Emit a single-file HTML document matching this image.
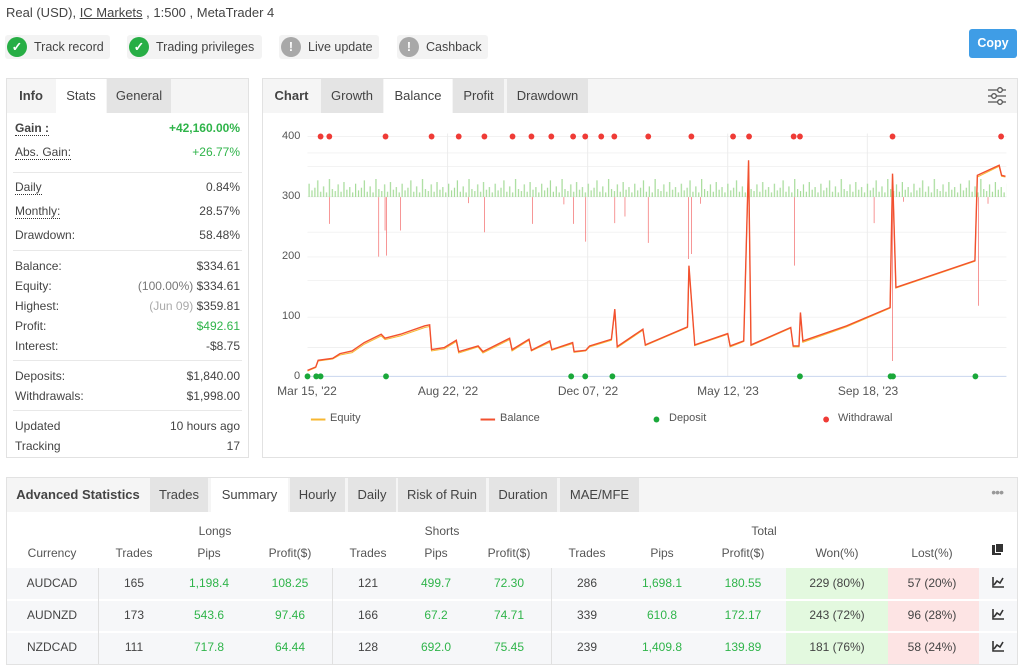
<!DOCTYPE html>
<html><head><meta charset="utf-8">
<style>
*{box-sizing:border-box;margin:0;padding:0}
body{width:1024px;height:669px;background:#fff;font-family:"Liberation Sans",sans-serif;color:#333;position:relative;overflow:hidden;font-size:12px}
.abs{position:absolute}
.badge{position:absolute;top:35px;height:24px;background:#f3f3f3;border-radius:3px;font-size:12.5px;line-height:24px;padding-left:29px;color:#444}
.badge i{position:absolute;left:2px;top:2px;width:20px;height:20px;border-radius:50%;font-style:normal;color:#fff;text-align:center;line-height:20px;font-weight:bold}
.panel{position:absolute;border:1px solid #e2e2e2;background:#fff}
.hdr{position:absolute;left:0;top:0;right:0;height:34px;background:#f5f5f5}
.tab{position:absolute;top:0;height:34px;line-height:34px;font-size:13px;text-align:center;color:#444;background:#e4e4e4}
.tab.w{background:#fff}
.tab.n{background:none;font-weight:bold;color:#444}
.row{position:absolute;left:8px;right:8px;font-size:12px;color:#444}
.row span{position:absolute;right:0}
.dl{border-bottom:1px dotted #333}
.sep{position:absolute;left:6px;right:6px;height:1px;background:#e8e8e8}
.g{color:#2fb44a}
.c{position:absolute;text-align:center;transform:translateX(-50%);font-size:12px}
</style></head><body>
<div class="abs" style="left:6px;top:5px;font-size:13px;color:#444">Real (USD), <u>IC Markets</u> , 1:500 , MetaTrader 4</div>
<div class="badge" style="left:5px;width:105px"><i style="background:#27ae45">✓</i>Track record</div>
<div class="badge" style="left:127px;width:135px"><i style="background:#27ae45">✓</i>Trading privileges</div>
<div class="badge" style="left:279px;width:100px"><i style="background:#a8a8a8">!</i>Live update</div>
<div class="badge" style="left:397px;width:91px"><i style="background:#a8a8a8">!</i>Cashback</div>
<div class="abs" style="left:969px;top:29px;width:48px;height:29px;background:#3f9de6;border-radius:3px;color:#fff;font-weight:bold;font-size:12.5px;text-align:center;line-height:29px">Copy</div>

<div class="panel" style="left:6px;top:78px;width:243px;height:380px">
<div class="hdr"></div>
<div class="tab n" style="left:0;width:48px">Info</div>
<div class="tab w" style="left:49px;width:50px">Stats</div>
<div class="tab" style="left:100px;width:64px">General</div>
<div class="row" style="top:42px;font-weight:bold"><b class="dl">Gain :</b><span class="g">+42,160.00%</span></div>
<div class="row" style="top:66px"><a class="dl">Abs. Gain:</a><span class="g">+26.77%</span></div>
<div class="sep" style="top:93px"></div>
<div class="row" style="top:101px"><a class="dl">Daily</a><span>0.84%</span></div>
<div class="row" style="top:125px"><a class="dl">Monthly:</a><span>28.57%</span></div>
<div class="row" style="top:149px">Drawdown:<span>58.48%</span></div>
<div class="sep" style="top:171px"></div>
<div class="row" style="top:180px">Balance:<span>$334.61</span></div>
<div class="row" style="top:200px">Equity:<span><a style="color:#777">(100.00%)</a> $334.61</span></div>
<div class="row" style="top:220px">Highest:<span><a style="color:#aaa">(Jun 09)</a> $359.81</span></div>
<div class="row" style="top:240px">Profit:<span class="g">$492.61</span></div>
<div class="row" style="top:260px">Interest:<span>-$8.75</span></div>
<div class="sep" style="top:281px"></div>
<div class="row" style="top:290px">Deposits:<span>$1,840.00</span></div>
<div class="row" style="top:310px">Withdrawals:<span>$1,998.00</span></div>
<div class="sep" style="top:331px"></div>
<div class="row" style="top:340px">Updated<span>10 hours ago</span></div>
<div class="row" style="top:360px">Tracking<span>17</span></div>
</div>

<div class="panel" style="left:262px;top:78px;width:756px;height:380px">
<div class="hdr"></div>
<div class="tab n" style="left:0;width:57px">Chart</div>
<div class="tab" style="left:58px;width:62px">Growth</div>
<div class="tab w" style="left:121px;width:68px">Balance</div>
<div class="tab" style="left:190px;width:51px">Profit</div>
<div class="tab" style="left:244px;width:81px">Drawdown</div>
<svg class="abs" style="left:723px;top:7px" width="22" height="20" viewBox="0 0 22 20" fill="none" stroke="#555" stroke-width="1.3"><path d="M2 4H20M2 10H20M2 16H20"/><circle cx="14" cy="4" r="2.3" fill="#fff"/><circle cx="8" cy="10" r="2.3" fill="#fff"/><circle cx="14" cy="16" r="2.3" fill="#fff"/></svg>
</div>

<svg class="abs" style="left:260px;top:80px" width="760" height="380" viewBox="0 0 1568 1136" preserveAspectRatio="none">
<defs><pattern id="bp" x="100" y="0" width="96" height="1136" patternUnits="userSpaceOnUse">
<g fill="#a6dc9a"><rect x="0" y="310" width="2.5" height="40"/><rect x="6" y="330" width="2.5" height="20"/><rect x="12" y="322" width="2.5" height="28"/><rect x="18" y="300" width="2.5" height="50"/><rect x="24" y="334" width="2.5" height="16"/><rect x="30" y="318" width="2.5" height="32"/><rect x="36" y="336" width="2.5" height="14"/><rect x="42" y="296" width="2.5" height="54"/><rect x="48" y="326" width="2.5" height="24"/><rect x="54" y="332" width="2.5" height="18"/><rect x="60" y="312" width="2.5" height="38"/><rect x="66" y="334" width="2.5" height="16"/><rect x="72" y="305" width="2.5" height="45"/><rect x="78" y="328" width="2.5" height="22"/><rect x="84" y="320" width="2.5" height="30"/><rect x="90" y="336" width="2.5" height="14"/></g>
</pattern></defs>
<g stroke="#ececec" stroke-width="2"><path d="M98 169H1540M98 349H1540M98 529H1540M98 709H1540M98 218H1540M98 258H1540M98 455H1540M98 600H1540M98 800H1540"/><path d="M387 160V886M676 160V886M965 160V886M1253 160V886"/></g>
<path d="M98 886H1540" stroke="#c9d6ee" stroke-width="3"/>
<rect x="100" y="290" width="1440" height="60" fill="url(#bp)"/>
<g stroke="#f25a5a" stroke-width="1.3" vector-effect="non-scaling-stroke"><path d="M143 350V430M245 350V528M258 350V450M261 350V525M290 350V450M463 350V455M562 350V430M647 350V430M672 350V483M732 350V428M753 350V408M801 350V487M884 350V535M890 350V520M1103 350V555M1267 350V428M1305 350V840M1482 350V675M1502 350V370M430 350V368M627 350V372M909 350V370M1328 350V364"/></g>
<polyline fill="none" stroke="#f7b731" stroke-width="1" vector-effect="non-scaling-stroke" points="98,870 115,860 120,840 150,834 165,822 190,815 215,790 250,765 258,776 290,765 340,740 350,737 354,810 380,804 405,782 410,816 450,798 460,816 515,776 520,810 555,778 560,810 598,784 602,808 645,788 648,814 672,810 680,798 725,778 732,690 737,800 790,748 795,794 882,740 885,560 897,794 965,760 970,798 998,782 1008,245 1013,794 1095,742 1100,798 1112,798 1115,700 1120,784 1210,738 1300,682 1305,285 1312,622 1475,542 1480,290 1525,258 1530,288 1538,290"/>
<polyline fill="none" stroke="#f2502f" stroke-width="1.4" vector-effect="non-scaling-stroke" points="98,868 115,858 120,838 150,832 165,818 190,810 215,785 250,760 258,772 290,760 340,735 350,732 354,806 380,800 405,778 410,812 450,795 460,812 515,772 520,806 555,775 560,808 598,780 602,806 645,785 648,812 672,808 680,795 725,775 732,685 737,797 790,745 795,792 882,738 885,555 897,792 965,758 970,795 998,780 1008,240 1013,792 1095,740 1100,795 1112,795 1115,695 1120,780 1210,735 1300,680 1305,280 1312,620 1475,540 1480,285 1525,255 1530,285 1538,288"/>
<g fill="#ef3b36"><ellipse cx="125" cy="169" rx="6" ry="9"/><ellipse cx="143" cy="169" rx="6" ry="9"/><ellipse cx="259" cy="169" rx="6" ry="9"/><ellipse cx="354" cy="169" rx="6" ry="9"/><ellipse cx="410" cy="169" rx="6" ry="9"/><ellipse cx="463" cy="169" rx="6" ry="9"/><ellipse cx="521" cy="169" rx="6" ry="9"/><ellipse cx="560" cy="169" rx="6" ry="9"/><ellipse cx="601" cy="169" rx="6" ry="9"/><ellipse cx="646" cy="169" rx="6" ry="9"/><ellipse cx="671" cy="169" rx="6" ry="9"/><ellipse cx="704" cy="169" rx="6" ry="9"/><ellipse cx="731" cy="169" rx="6" ry="9"/><ellipse cx="801" cy="169" rx="6" ry="9"/><ellipse cx="890" cy="169" rx="6" ry="9"/><ellipse cx="976" cy="169" rx="6" ry="9"/><ellipse cx="1009" cy="169" rx="6" ry="9"/><ellipse cx="1101" cy="169" rx="6" ry="9"/><ellipse cx="1114" cy="169" rx="6" ry="9"/><ellipse cx="1305" cy="169" rx="6" ry="9"/><ellipse cx="1529" cy="169" rx="6" ry="9"/><ellipse cx="1168" cy="1015" rx="6" ry="9"/></g>
<g fill="#1aa83a"><ellipse cx="98" cy="886" rx="6" ry="9"/><ellipse cx="116" cy="886" rx="6" ry="9"/><ellipse cx="125" cy="886" rx="6" ry="9"/><ellipse cx="260" cy="886" rx="6" ry="9"/><ellipse cx="642" cy="886" rx="6" ry="9"/><ellipse cx="671" cy="886" rx="6" ry="9"/><ellipse cx="727" cy="886" rx="6" ry="9"/><ellipse cx="1114" cy="886" rx="6" ry="9"/><ellipse cx="1301" cy="886" rx="6" ry="9"/><ellipse cx="1306" cy="886" rx="6" ry="9"/><ellipse cx="1476" cy="886" rx="6" ry="9"/><ellipse cx="818" cy="1015" rx="6" ry="9"/></g>
<path d="M105 1015H135" stroke="#f7b731" stroke-width="2" vector-effect="non-scaling-stroke"/>
<path d="M455 1015H485" stroke="#f2502f" stroke-width="2" vector-effect="non-scaling-stroke"/>
</svg>
<div style="font-size:11px;color:#555">
<div class="abs" style="left:282px;top:130px">400</div><div class="abs" style="left:282px;top:190px">300</div><div class="abs" style="left:282px;top:250px">200</div><div class="abs" style="left:282px;top:310px">100</div><div class="abs" style="left:294px;top:370px">0</div>
<div class="c" style="left:307px;top:384px">Mar 15, '22</div><div class="c" style="left:448px;top:384px">Aug 22, '22</div><div class="c" style="left:588px;top:384px">Dec 07, '22</div><div class="c" style="left:728px;top:384px">May 12, '23</div><div class="c" style="left:868px;top:384px">Sep 18, '23</div>
<div class="abs" style="left:330px;top:412px">Equity</div><div class="abs" style="left:500px;top:412px">Balance</div><div class="abs" style="left:669px;top:412px">Deposit</div><div class="abs" style="left:838px;top:412px">Withdrawal</div>
</div>

<div class="panel" style="left:6px;top:477px;width:1012px;height:188px">
<div class="hdr"></div>
<div class="tab n" style="left:0;width:142px">Advanced Statistics</div>
<div class="tab" style="left:143px;width:58px">Trades</div>
<div class="tab w" style="left:204px;width:77px">Summary</div>
<div class="tab" style="left:283px;width:55px">Hourly</div>
<div class="tab" style="left:341px;width:48px">Daily</div>
<div class="tab" style="left:391px;width:88px">Risk of Ruin</div>
<div class="tab" style="left:482px;width:68px">Duration</div>
<div class="tab" style="left:553px;width:79px">MAE/MFE</div>
<div class="abs" style="right:14px;top:6px;color:#999;font-size:14px;letter-spacing:-1px">•••</div>
</div>
<div class="abs" style="left:7px;top:568px;width:1010px;height:96px;background:#f6f7f9"></div>
<div class="abs" style="left:786px;top:568px;width:102px;height:96px;background:#e3f9df"></div>
<div class="abs" style="left:888px;top:568px;width:91px;height:96px;background:#fde4e4"></div>
<div class="abs" style="left:7px;top:599px;width:1010px;height:2px;background:#fff"></div>
<div class="abs" style="left:7px;top:631px;width:1010px;height:2px;background:#fff"></div>
<div class="abs" style="left:98px;top:568px;width:1px;height:96px;background:#e0e0e0"></div>
<div class="abs" style="left:332px;top:568px;width:1px;height:96px;background:#e0e0e0"></div>
<div class="abs" style="left:551px;top:568px;width:1px;height:96px;background:#e0e0e0"></div>
<div style="font-size:11px;color:#555">
<div class="c" style="left:215px;top:524px">Longs</div><div class="c" style="left:442px;top:524px">Shorts</div><div class="c" style="left:764px;top:524px">Total</div>
<div class="c" style="left:52px;top:546px">Currency</div><div class="c" style="left:134px;top:546px">Trades</div><div class="c" style="left:209px;top:546px">Pips</div><div class="c" style="left:290px;top:546px">Profit($)</div><div class="c" style="left:368px;top:546px">Trades</div><div class="c" style="left:436px;top:546px">Pips</div><div class="c" style="left:509px;top:546px">Profit($)</div><div class="c" style="left:587px;top:546px">Trades</div><div class="c" style="left:662px;top:546px">Pips</div><div class="c" style="left:743px;top:546px">Profit($)</div><div class="c" style="left:837px;top:546px">Won(%)</div><div class="c" style="left:932px;top:546px">Lost(%)</div>
</div>
<div class="abs" style="left:992px;top:545px;width:9px;height:10px;border:1px solid #333;background:#333"></div>
<div class="abs" style="left:995px;top:543px;width:9px;height:10px;background:#333;border:1px solid #fff"></div>
<div style="color:#444">
<div class="c" style="left:52px;top:576px">AUDCAD</div><div class="c" style="left:134px;top:576px">165</div><div class="c g" style="left:209px;top:576px">1,198.4</div><div class="c g" style="left:290px;top:576px">108.25</div><div class="c" style="left:368px;top:576px">121</div><div class="c g" style="left:436px;top:576px">499.7</div><div class="c g" style="left:509px;top:576px">72.30</div><div class="c" style="left:587px;top:576px">286</div><div class="c g" style="left:662px;top:576px">1,698.1</div><div class="c g" style="left:743px;top:576px">180.55</div><div class="c" style="left:837px;top:576px">229 (80%)</div><div class="c" style="left:932px;top:576px">57 (20%)</div>
<div class="c" style="left:52px;top:608px">AUDNZD</div><div class="c" style="left:134px;top:608px">173</div><div class="c g" style="left:209px;top:608px">543.6</div><div class="c g" style="left:290px;top:608px">97.46</div><div class="c" style="left:368px;top:608px">166</div><div class="c g" style="left:436px;top:608px">67.2</div><div class="c g" style="left:509px;top:608px">74.71</div><div class="c" style="left:587px;top:608px">339</div><div class="c g" style="left:662px;top:608px">610.8</div><div class="c g" style="left:743px;top:608px">172.17</div><div class="c" style="left:837px;top:608px">243 (72%)</div><div class="c" style="left:932px;top:608px">96 (28%)</div>
<div class="c" style="left:52px;top:640px">NZDCAD</div><div class="c" style="left:134px;top:640px">111</div><div class="c g" style="left:209px;top:640px">717.8</div><div class="c g" style="left:290px;top:640px">64.44</div><div class="c" style="left:368px;top:640px">128</div><div class="c g" style="left:436px;top:640px">692.0</div><div class="c g" style="left:509px;top:640px">75.45</div><div class="c" style="left:587px;top:640px">239</div><div class="c g" style="left:662px;top:640px">1,409.8</div><div class="c g" style="left:743px;top:640px">139.89</div><div class="c" style="left:837px;top:640px">181 (76%)</div><div class="c" style="left:932px;top:640px">58 (24%)</div>
</div>
<svg class="abs" style="left:992px;top:577px" width="12" height="76" viewBox="0 0 12 76" fill="none" stroke="#333" stroke-width="1.6"><g id="ic"><path d="M1 0V10H12M2 8L5 4L8 6L11 1"/></g><use href="#ic" y="32"/><use href="#ic" y="64"/></svg>
</body></html>
